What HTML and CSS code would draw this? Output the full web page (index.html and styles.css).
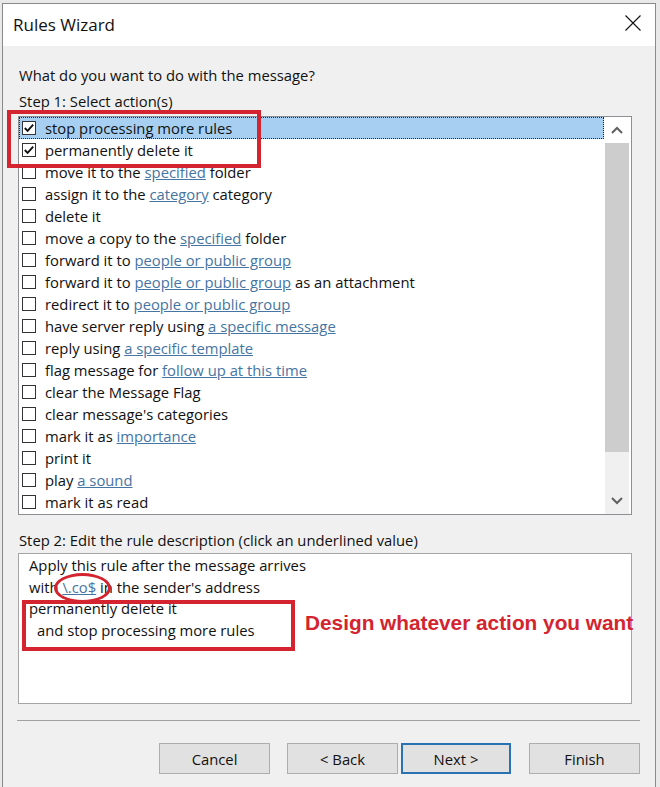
FILE: index.html
```html
<!DOCTYPE html>
<html>
<head>
<meta charset="utf-8">
<link rel="stylesheet" href="styles.css">
</head>
<body>
<div class="dialog">
  <div class="titlebar">
    <span class="title">Rules Wizard</span>
    <svg class="close" width="16" height="16" viewBox="0 0 16 16"><path d="M0.5 0.5 L15.5 15.5 M15.5 0.5 L0.5 15.5" stroke="#111" stroke-width="1.1" fill="none"/></svg>
  </div>
  <div class="content">
    <p class="q">What do you want to do with the message?</p>
    <p class="step">Step 1: Select action(s)</p>
    <div class="listwrap">
      <div class="listbox">
        <ul class="rows">
          <li class="row selected"><span class="cb checked"><svg viewBox="0 0 12 12"><path d="M1.8 6 L4.6 8.8 L10.2 2.6" /></svg></span><span>stop processing more rules</span></li>
          <li class="row"><span class="cb checked"><svg viewBox="0 0 12 12"><path d="M1.8 6 L4.6 8.8 L10.2 2.6" /></svg></span><span>permanently delete it</span></li>
          <li class="row"><span class="cb"></span><span>move it to the <a>specified</a> folder</span></li>
          <li class="row"><span class="cb"></span><span>assign it to the <a>category</a> category</span></li>
          <li class="row"><span class="cb"></span><span>delete it</span></li>
          <li class="row"><span class="cb"></span><span>move a copy to the <a>specified</a> folder</span></li>
          <li class="row"><span class="cb"></span><span>forward it to <a>people or public group</a></span></li>
          <li class="row"><span class="cb"></span><span>forward it to <a>people or public group</a> as an attachment</span></li>
          <li class="row"><span class="cb"></span><span>redirect it to <a>people or public group</a></span></li>
          <li class="row"><span class="cb"></span><span>have server reply using <a>a specific message</a></span></li>
          <li class="row"><span class="cb"></span><span>reply using <a>a specific template</a></span></li>
          <li class="row"><span class="cb"></span><span>flag message for <a>follow up at this time</a></span></li>
          <li class="row"><span class="cb"></span><span>clear the Message Flag</span></li>
          <li class="row"><span class="cb"></span><span>clear message's categories</span></li>
          <li class="row"><span class="cb"></span><span>mark it as <a>importance</a></span></li>
          <li class="row"><span class="cb"></span><span>print it</span></li>
          <li class="row"><span class="cb"></span><span>play <a>a sound</a></span></li>
          <li class="row"><span class="cb"></span><span>mark it as read</span></li>
        </ul>
        <div class="scrollbar">
          <div class="sb-btn"><svg width="12" height="8" viewBox="0 0 12 8"><path d="M1 7 L6 2 L11 7" /></svg></div>
          <div class="thumb"></div>
          <div class="track"></div>
          <div class="sb-btn"><svg width="12" height="8" viewBox="0 0 12 8"><path d="M1 1 L6 6 L11 1" /></svg></div>
        </div>
      </div>
      <div class="annot box1"></div>
    </div>
    <p class="step2">Step 2: Edit the rule description (click an underlined value)</p>
    <div class="desc">
      <p class="dline">Apply this rule after the message arrives</p>
      <p class="dline">with <a>\.co$</a> in the sender's address</p>
      <p class="dline">permanently delete it</p>
      <p class="dline indent">and stop processing more rules</p>
      <div class="annot ellipse"></div>
      <div class="annot box2"></div>
      <div class="note">Design whatever action you want</div>
    </div>
    <div class="sep"></div>
    <div class="buttons">
      <button class="btn">Cancel</button>
      <button class="btn back">&lt; Back</button>
      <button class="btn next">Next &gt;</button>
      <button class="btn finish">Finish</button>
    </div>
  </div>
</div>
</body>
</html>
```

FILE: styles.css
```css
html, body {
  margin: 0;
  padding: 0;
}
body {
  background: #e9e9e9;
  font-family: "Open Sans", "Noto Sans", sans-serif;
  font-size: 14.8px;
  color: #111;
  overflow: hidden;
}
.dialog {
  margin: 3px 0 0 2px;
  width: 654px;
  height: 800px;
  box-sizing: border-box;
  border: 1px solid #8a8a8a;
  background: #f0f0f0;
}
.titlebar {
  height: 42px;
  background: #fff;
  display: flex;
  align-items: center;
  justify-content: space-between;
  padding: 0 14px 0 10px;
}
.title {
  font-size: 17px;
  position: relative;
  top: -1px;
}
.close {
  display: block;
  margin-top: -4px;
}
.content {
  padding: 19px 15px 0 16px;
}
p {
  margin: 0;
}
.q, .step, .step2 {
  line-height: 20px;
}
.step {
  margin-top: 6px;
}
.listwrap {
  position: relative;
  margin: 5px 0 0 -1px;
  width: 614px;
}
.listbox {
  box-sizing: border-box;
  height: 399px;
  border: 1px solid #8e8f94;
  background: #fff;
  display: flex;
  overflow: hidden;
}
.rows {
  list-style: none;
  margin: 0;
  padding: 0;
  flex: 1;
  min-width: 0;
}
.row {
  height: 22px;
  display: flex;
  align-items: center;
  line-height: 22px;
  white-space: nowrap;
  box-sizing: border-box;
}
.row.selected {
  background: #a6cff1;
  outline: 1px dotted #1c2a3a;
  outline-offset: -1px;
  margin-right: 1px;
}
.cb {
  width: 14px;
  height: 14px;
  box-sizing: border-box;
  border: 1px solid #333;
  background: #fff;
  margin: 0 9px 0 3px;
  flex: none;
  display: flex;
}
.cb svg {
  width: 12px;
  height: 12px;
}
.cb svg path {
  fill: none;
  stroke: #111;
  stroke-width: 1.9;
}
a {
  color: #4675a3;
  text-decoration: underline;
}
.scrollbar {
  width: 24px;
  margin-right: 2px;
  display: flex;
  flex-direction: column;
  background: #f0f0f0;
}
.sb-btn {
  height: 26px;
  display: flex;
  align-items: center;
  justify-content: center;
  flex: none;
}
.sb-btn:first-child {
  background: #fff;
}
.sb-btn svg path {
  fill: none;
  stroke: #606060;
  stroke-width: 2;
}
.thumb {
  height: 309px;
  background: #cdcdcd;
  flex: none;
}
.track {
  flex: 1;
}
.annot {
  position: absolute;
  border: 4px solid #d3242f;
  box-sizing: border-box;
  pointer-events: none;
}
.box1 {
  left: -11px;
  top: -6px;
  width: 254px;
  height: 58px;
}
.step2 {
  margin-top: 15px;
}
.desc {
  position: relative;
  margin: 3px 0 0 -1px;
  width: 614px;
  height: 151px;
  box-sizing: border-box;
  border: 1px solid #a5a5a5;
  background: #fff;
  padding: 1px 0 0 10px;
}
.dline {
  line-height: 21.5px;
}
.indent {
  padding-left: 8px;
}
.ellipse {
  left: 35px;
  top: 19px;
  width: 57px;
  height: 30px;
  border-width: 3.5px;
  border-radius: 50%;
}
.box2 {
  left: 3px;
  top: 46px;
  width: 273px;
  height: 51px;
}
.note {
  position: absolute;
  left: 286px;
  top: 57px;
  font-family: "Liberation Sans", Arial, sans-serif;
  font-weight: bold;
  font-size: 20.8px;
  line-height: 24px;
  color: #d3242f;
  white-space: nowrap;
}
.sep {
  margin: 16px 0 0 -2px;
  width: 623px;
  height: 1px;
  background: #a0a0a0;
}
.buttons {
  margin-top: 22px;
  display: flex;
  justify-content: flex-end;
}
.btn {
  font-family: "Open Sans", "Noto Sans", sans-serif;
  font-size: 14.8px;
  color: #111;
  width: 111px;
  height: 31px;
  box-sizing: border-box;
  border: 1px solid #adadad;
  background: #e1e1e1;
  padding: 0;
}
.back {
  margin-left: 17px;
}
.next {
  margin-left: 3px;
  width: 110px;
  border: 2px solid #2a72b2;
}
.finish {
  margin-left: 18px;
}
```
